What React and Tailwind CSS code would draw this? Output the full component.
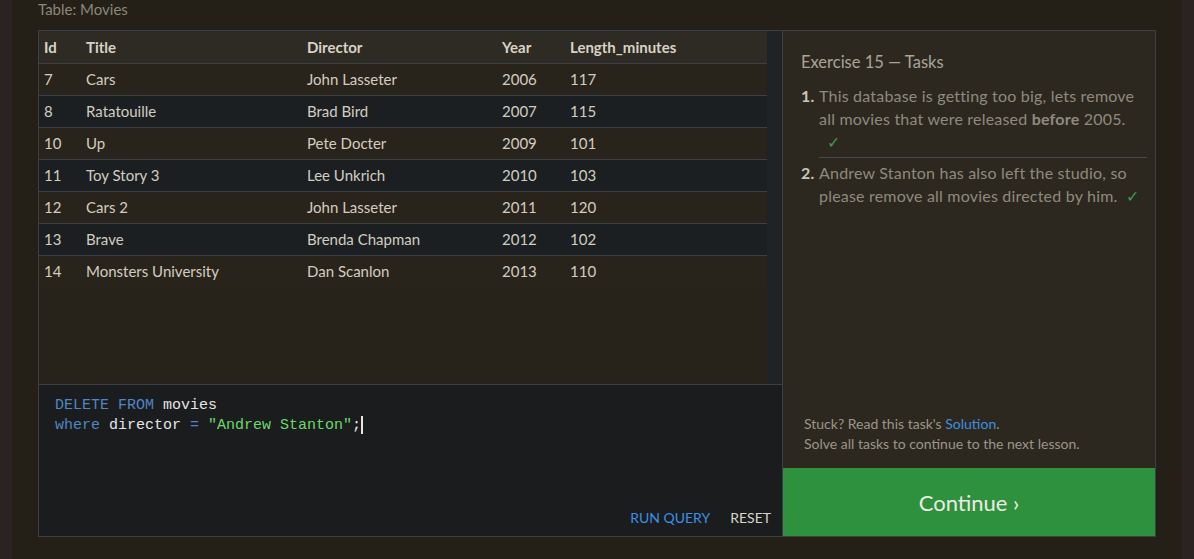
import React from 'react';

const rows = [
  [7, 'Cars', 'John Lasseter', 2006, 117],
  [8, 'Ratatouille', 'Brad Bird', 2007, 115],
  [10, 'Up', 'Pete Docter', 2009, 101],
  [11, 'Toy Story 3', 'Lee Unkrich', 2010, 103],
  [12, 'Cars 2', 'John Lasseter', 2011, 120],
  [13, 'Brave', 'Brenda Chapman', 2012, 102],
  [14, 'Monsters University', 'Dan Scanlon', 2013, 110],
];

const Check = () => <span className="text-[#3e9b46] ml-2">✓</span>;

const App = () => {
  return (
    <div className="flex h-[559px] w-[1194px] bg-[#241f17] font-['Lato','Open_Sans',sans-serif] overflow-hidden">
      <div className="w-3 bg-[#2b2321]" />

      <div className="flex-1 flex flex-col px-[26px]">
        <div className="h-[30px] -mt-[2px] text-[15px] text-[#8c877a]">Table: Movies</div>

        <div className="flex h-[507px] mt-[2px] border border-[#3c4044]">
          {/* Left: table + editor */}
          <div className="w-[743px] flex flex-col">
            <div className="flex h-[353px] bg-[#28231a]">
              <table className="w-[728px] self-start text-[15px] text-[#d2cdc0] border-collapse">
                <thead>
                  <tr className="h-8 bg-[#2d2b23] border-b border-[#3c4044] text-left text-[#d8d3c6]">
                    <th className="w-[42px] pl-[5px] font-bold">Id</th>
                    <th className="w-[221px] pl-[5px] font-bold">Title</th>
                    <th className="w-[195px] pl-[5px] font-bold">Director</th>
                    <th className="w-[68px] pl-[5px] font-bold">Year</th>
                    <th className="pl-[5px] font-bold">Length_minutes</th>
                  </tr>
                </thead>
                <tbody>
                  {rows.map((r, i) => (
                    <tr
                      key={r[0]}
                      className={
                        'h-8 ' +
                        (i % 2 === 0 ? 'bg-[#29241b] ' : 'bg-[#1c1f21] ') +
                        (i < rows.length - 1 ? 'border-b border-[#3c4044]' : '')
                      }
                    >
                      {r.map((c, j) => (
                        <td key={j} className="pl-[5px]">{c}</td>
                      ))}
                    </tr>
                  ))}
                </tbody>
              </table>
              <div className="w-[15px] bg-[#1f2326]" />
            </div>

            <div className="flex-1 flex flex-col bg-[#1b1c1e] border-t border-[#3c4044]">
              <pre className="pl-4 pt-[11px] font-['Liberation_Mono',monospace] text-[15px] leading-5 text-[#e6e6e6]">
                <span className="text-[#4f86c6]">DELETE FROM</span> movies{'\n'}
                <span className="text-[#4f86c6]">where</span> director <span className="text-[#4f86c6]">=</span>{' '}
                <span className="text-[#6ad96a]">"Andrew Stanton"</span>;<span className="inline-block w-[2px] h-[18px] align-middle bg-[#e6e6e6]" />
              </pre>
              <div className="mt-auto flex justify-end gap-[20px] pr-[11px] pb-[8px] text-[14px]">
                <button className="text-[#3b8fe8]">RUN QUERY</button>
                <button className="text-[#d8d4c8]">RESET</button>
              </div>
            </div>
          </div>

          {/* Right: tasks */}
          <div className="flex-1 flex flex-col border-l border-[#3c4044] bg-[#2c281f]">
            <div className="pl-[18px] pr-[8px] pt-[19px]">
              <h2 className="text-[16.5px] text-[#a9a498]">Exercise 15 — Tasks</h2>
              <ol className="mt-[9px] text-[16px] tracking-[0.2px] leading-[23px] text-[#8f8a7e]">
                <li className="flex">
                  <span className="w-[18px] shrink-0 font-bold text-[#c9c5bb]">1.</span>
                  <div className="pb-[4px] border-b border-[#464a4e]">
                    This database is getting too big, lets remove all movies that were released{' '}
                    <b>before</b> 2005.
                    <br />
                    <Check />
                  </div>
                </li>
                <li className="flex pt-[3px]">
                  <span className="w-[18px] shrink-0 font-bold text-[#c9c5bb]">2.</span>
                  <div>
                    Andrew Stanton has also left the studio, so please remove all movies directed by him.
                    <Check />
                  </div>
                </li>
              </ol>
            </div>

            <div className="mt-auto px-[21px] pb-[14px] text-[14px] leading-5 text-[#9b968a]">
              <p>
                Stuck? Read this task's <span className="text-[#3c8fe0]">Solution</span>.
              </p>
              <p>Solve all tasks to continue to the next lesson.</p>
            </div>
            <button className="h-[68px] bg-[#2e913d] text-[22px] text-[#ecebe3]">Continue ›</button>
          </div>
        </div>
      </div>

      <div className="w-3 bg-[#2b2321]" />
    </div>
  );
};

export default App;
